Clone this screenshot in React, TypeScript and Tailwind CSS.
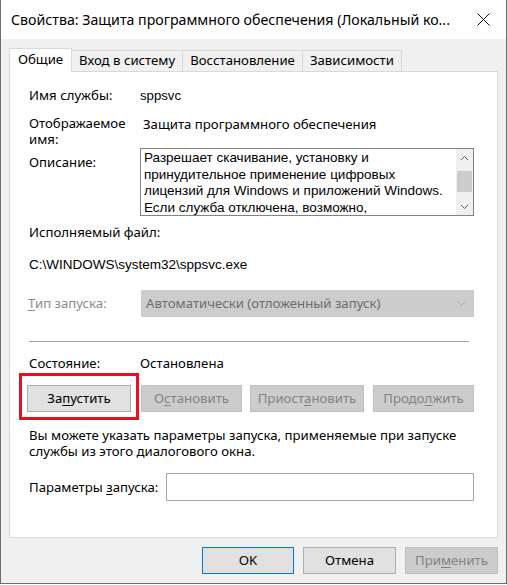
import React from "react";

const seg = "font-['Noto_Sans',sans-serif]";
const ms = "font-['Liberation_Sans',Arial,sans-serif]";

function Key({ children }: { children: React.ReactNode }) {
  return <span className="underline underline-offset-2">{children}</span>;
}

function Tab({ label, active }: { label: string; active?: boolean }) {
  if (active) {
    return (
      <div className="relative z-10 -mb-px flex h-[24px] w-[63px] items-center justify-center border border-b-0 border-[#d9d9d9] bg-white pb-[2px] text-[13.2px]">
        {label}
      </div>
    );
  }
  return (
    <div className="-ml-px mt-[2px] flex h-[21px] items-center whitespace-nowrap border border-b-0 border-[#d9d9d9] bg-[#f0f0f0] px-[7px] text-[13.2px]">
      {label}
    </div>
  );
}

function SheetButton({
  children,
  w,
  disabled,
  focused,
}: {
  children: React.ReactNode;
  w: string;
  disabled?: boolean;
  focused?: boolean;
}) {
  return (
    <button
      className={`flex h-[27px] items-center justify-center whitespace-nowrap border text-[13.2px] ${w} ${
        disabled
          ? "border-[#bfbfbf] bg-[#cccccc] text-[#838383]"
          : focused
          ? "border-[#0078d7] bg-[#e1e1e1] text-black"
          : "border-[#adadad] bg-[#e1e1e1] text-black"
      }`}
    >
      {children}
    </button>
  );
}

function DescriptionBox() {
  return (
    <div className="relative flex h-[68px] w-[334px] border border-[#828282] bg-white">
      <div className={`flex-1 overflow-hidden whitespace-nowrap pl-[3px] pt-[1px] text-[13.5px] leading-[16.6px] ${ms}`}>
        Разрешает скачивание, установку и
        <br />
        принудительное применение цифровых
        <br />
        лицензий для Windows и приложений Windows.
        <br />
        Если служба отключена, возможно,
      </div>
      {/* vertical scrollbar */}
      <div className="flex w-[17px] flex-col bg-[#f0f0f0]">
        <div className="flex h-[17px] items-center justify-center">
          <svg width="9" height="6" viewBox="0 0 9 6">
            <path d="M1 5 L4.5 1.5 L8 5" fill="none" stroke="#606060" strokeWidth="1" />
          </svg>
        </div>
        <div className="mx-[1px] mt-[5px] h-[21px] bg-[#cdcdcd]" />
        <div className="flex-1" />
        <div className="flex h-[17px] items-center justify-center">
          <svg width="9" height="6" viewBox="0 0 9 6">
            <path d="M1 1 L4.5 4.5 L8 1" fill="none" stroke="#606060" strokeWidth="1" />
          </svg>
        </div>
      </div>
    </div>
  );
}

export default function App() {
  return (
    <div className={`h-[585px] w-[507px] bg-white text-black ${seg}`}>
      <div className="flex h-[584px] flex-col border-x border-b border-[#6e6e6e] bg-[#f0f0f0]">
        {/* title bar */}
        <div className="flex h-[39px] items-center justify-between bg-white pl-[10px] pr-[16px]">
          <span className="whitespace-nowrap text-[14.2px]">
            Свойства: Защита программного обеспечения (Локальный ко...
          </span>
          <svg width="13" height="13" viewBox="0 0 13 13">
            <path d="M0.5 0.5 L12.5 12.5 M12.5 0.5 L0.5 12.5" stroke="#111" strokeWidth="1" />
          </svg>
        </div>

        <div className="flex flex-1 flex-col px-[8px] pt-[9px]">
          {/* tabs */}
          <div className="flex items-start">
            <Tab label="Общие" active />
            <Tab label="Вход в систему" />
            <Tab label="Восстановление" />
            <Tab label="Зависимости" />
          </div>

          {/* General page */}
          <div className="flex h-[467px] w-[489px] flex-col whitespace-nowrap border border-[#d9d9d9] bg-white pl-[19px] pt-[15px] text-[13.2px] leading-[17px]">
            <div className="flex">
              <span className="w-[111px]">Имя службы:</span>
              <span className={ms}>sppsvc</span>
            </div>

            <div className="mt-[11px] flex">
              <span className="w-[114px] leading-[16px]">
                Отображаемое
                <br />
                имя:
              </span>
              <span className="pt-[1px]">Защита программного обеспечения</span>
            </div>

            <div className="mt-[1px] flex">
              <span className="mt-[6px] w-[111px]">Описание:</span>
              <DescriptionBox />
            </div>

            <div className="mt-[8px]">Исполняемый файл:</div>
            <div className={`mt-[15px] ${ms} text-[13.5px]`}>C:\WINDOWS\system32\sppsvc.exe</div>

            <div className="mt-[17px] flex items-center">
              <span className="-ml-[1px] w-[113px] text-[#8c8c8c]">
                <Key>Т</Key>ип запуска:
              </span>
              <div className="flex h-[27px] w-[333px] items-center justify-between bg-[#cccccc] pl-[5px] pr-[8px] text-[#6d6d6d]">
                <span>Автоматически (отложенный запуск)</span>
                <svg width="9" height="5" viewBox="0 0 9 5">
                  <path d="M0.5 0.5 L4.5 4.5 L8.5 0.5" fill="none" stroke="#a8a8a8" strokeWidth="1" />
                </svg>
              </div>
            </div>

            <div className="mr-[28px] mt-[24px] h-px bg-[#a0a0a0]" />

            <div className="mt-[13px] flex">
              <span className="w-[111px]">Состояние:</span>
              <span>Остановлена</span>
            </div>

            <div className="mt-[13px] flex items-start">
              <div className="-mb-[8px] -ml-[10px] -mt-[12px] border-[3px] border-[#e81123] px-[5px] pb-[5px] pt-[9px]">
                <SheetButton w="w-[104px]">
                  За<Key>п</Key>устить
                </SheetButton>
              </div>
              <div className="ml-[2px]" />
              <SheetButton w="w-[101px]" disabled>
                О<Key>с</Key>тановить
              </SheetButton>
              <div className="ml-[8px]" />
              <SheetButton w="w-[114px]" disabled>
                Приост<Key>а</Key>новить
              </SheetButton>
              <div className="ml-[9px]" />
              <SheetButton w="w-[101px]" disabled>
                Продо<Key>л</Key>жить
              </SheetButton>
            </div>

            <div className="mt-[15px] leading-[16px]">
              Вы можете указать параметры запуска, применяемые при запуске
              <br />
              службы из этого диалогового окна.
            </div>

            <div className="mt-[14px] flex items-center">
              <span className="w-[137px]">
                Параметры <Key>з</Key>апуска:
              </span>
              <div className="h-[28px] w-[308px] border border-[#a8a8a8] bg-white" />
            </div>
          </div>

          {/* dialog buttons */}
          <div className="mt-[9px] flex justify-end gap-[9px]">
            <SheetButton w="w-[92px]" focused>
              OK
            </SheetButton>
            <SheetButton w="w-[93px]">Отмена</SheetButton>
            <SheetButton w="w-[93px]" disabled>
              При<Key>м</Key>енить
            </SheetButton>
          </div>
        </div>
      </div>
    </div>
  );
}
